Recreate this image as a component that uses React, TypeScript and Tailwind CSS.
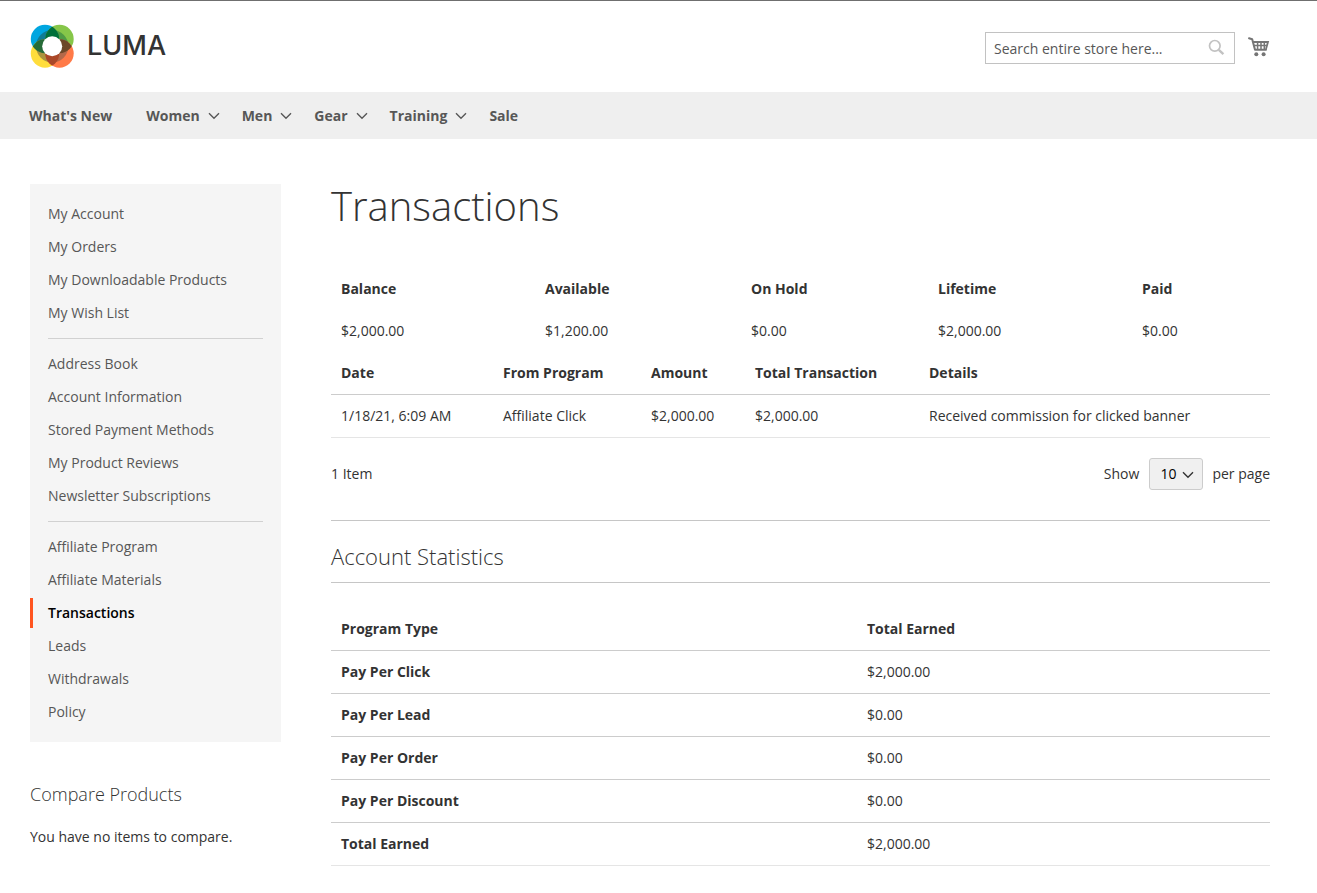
import type { ReactNode } from "react"

const navItems = [
  { label: "What's New", children: false },
  { label: "Women", children: true },
  { label: "Men", children: true },
  { label: "Gear", children: true },
  { label: "Training", children: true },
  { label: "Sale", children: false },
]

const accountLinks = [
  ["My Account", "My Orders", "My Downloadable Products", "My Wish List"],
  [
    "Address Book",
    "Account Information",
    "Stored Payment Methods",
    "My Product Reviews",
    "Newsletter Subscriptions",
  ],
  ["Affiliate Program", "Affiliate Materials", "Transactions", "Leads", "Withdrawals", "Policy"],
]

const balances = [
  { label: "Balance", value: "$2,000.00", width: "w-[204px]" },
  { label: "Available", value: "$1,200.00", width: "w-[206px]" },
  { label: "On Hold", value: "$0.00", width: "w-[187px]" },
  { label: "Lifetime", value: "$2,000.00", width: "w-[204px]" },
  { label: "Paid", value: "$0.00", width: "" },
]

const transactions = [
  {
    id: 1,
    date: "1/18/21, 6:09 AM",
    program: "Affiliate Click",
    amount: "$2,000.00",
    total: "$2,000.00",
    details: "Received commission for clicked banner",
  },
]

const statistics = [
  { type: "Pay Per Click", total: "$2,000.00" },
  { type: "Pay Per Lead", total: "$0.00" },
  { type: "Pay Per Order", total: "$0.00" },
  { type: "Pay Per Discount", total: "$0.00" },
  { type: "Total Earned", total: "$2,000.00" },
]

const Logo = () => (
  <a href="#" aria-label="Luma" className="flex items-center gap-3">
    <svg width="45" height="45" viewBox="0 0 45 45" aria-hidden="true">
      <defs>
        <clipPath id="tl"><circle cx="15" cy="15" r="14.2" /></clipPath>
        <clipPath id="tr"><circle cx="29.5" cy="15" r="14.2" /></clipPath>
        <clipPath id="bl"><circle cx="15" cy="29.5" r="14.2" /></clipPath>
        <clipPath id="br"><circle cx="29.5" cy="29.5" r="14.2" /></clipPath>
      </defs>
      <circle cx="15" cy="15" r="14.2" fill="#00a6e0" />
      <circle cx="29.5" cy="15" r="14.2" fill="#86c649" />
      <circle cx="15" cy="29.5" r="14.2" fill="#ffdd3c" />
      <circle cx="29.5" cy="29.5" r="14.2" fill="#ff7a48" />
      <circle cx="22.2" cy="22.2" r="16.2" fill="#107c94" clipPath="url(#tl)" />
      <circle cx="22.2" cy="22.2" r="16.2" fill="#4f9b45" clipPath="url(#tr)" />
      <circle cx="22.2" cy="22.2" r="16.2" fill="#ab943d" clipPath="url(#bl)" />
      <circle cx="22.2" cy="22.2" r="16.2" fill="#b4694a" clipPath="url(#br)" />
      <g clipPath="url(#tl)">
        <circle cx="29.5" cy="15" r="14.2" fill="#00703a" />
        <circle cx="15" cy="29.5" r="14.2" fill="#266b38" />
      </g>
      <g clipPath="url(#br)">
        <circle cx="29.5" cy="15" r="14.2" fill="#6c4828" />
        <circle cx="15" cy="29.5" r="14.2" fill="#aa4828" />
      </g>
      <circle cx="22.2" cy="22.2" r="10" fill="#fff" />
    </svg>
    <span className="font-['Inter',sans-serif] text-[27px] leading-8 font-medium text-[#333]">LUMA</span>
  </a>
)

const Chevron = ({ className = "" }: { className?: string }) => (
  <svg width="12" height="8" viewBox="0 0 12 8" fill="none" stroke="currentColor" className={className} aria-hidden="true">
    <path d="M1 1.2 6 6.2 11 1.2" strokeWidth="1.4" />
  </svg>
)

const Header = () => (
  <header className="border-t border-[#6f6f6f]">
    <div className="flex h-[91px] max-w-[1300px] items-center justify-between px-[30px] pb-px">
      <Logo />
      <div className="flex items-center gap-[13px] pt-[3px]">
        <form className="flex h-8 w-[250px] items-center border border-[#c2c2c2] bg-white">
          <input
            type="text"
            aria-label="Search"
            placeholder="Search entire store here..."
            className="h-full min-w-0 flex-1 pt-px pl-2 text-sm placeholder:text-[#575757] outline-none"
          />
          <button type="submit" aria-label="Search" className="px-[9px] text-[#c2c2c2]">
            <svg width="17" height="17" viewBox="0 0 17 17" fill="none" stroke="currentColor">
              <circle cx="6.8" cy="6.8" r="5.3" strokeWidth="1.7" />
              <path d="m10.8 10.8 4.6 4.4" strokeWidth="2.4" />
            </svg>
          </button>
        </form>
        <a href="#" aria-label="My Cart" className="pb-px text-[#757575]">
          <svg width="22" height="22" viewBox="0 0 22 22" fill="none" stroke="currentColor">
            <path d="M1 2.2 4.2 3.2 7 13.8H18" strokeWidth="2" strokeLinecap="round" strokeLinejoin="round" />
            <path d="M5 6H20L18 13" strokeWidth="1.8" />
            <path d="M6 9.5H18.6M9.6 6V13M13 6V13M16.3 6V13" strokeWidth="1.5" />
            <circle cx="8.3" cy="18.2" r="2" fill="currentColor" stroke="none" />
            <circle cx="15.6" cy="18.2" r="2" fill="currentColor" stroke="none" />
          </svg>
        </a>
      </div>
    </div>
  </header>
)

const Navigation = () => (
  <nav className="bg-[#efefef]">
    <ul className="flex h-[47px] max-w-[1300px] items-center px-[29px] text-sm font-bold text-[#575757]">
      {navItems.map((item) => (
        <li key={item.label} className={item.children ? "mr-[22px]" : "mr-[34px]"}>
          <a href="#" className="flex items-center gap-2">
            {item.label}
            {item.children && <Chevron />}
          </a>
        </li>
      ))}
    </ul>
  </nav>
)

const Sidebar = () => (
  <aside className="w-[251px] shrink-0">
    <nav className="bg-[#f5f5f5] pt-[15px] pb-3">
      {accountLinks.map((group, index) => (
        <ul
          key={group[0]}
          className={index > 0 ? "mt-[7px] before:mx-[18px] before:mb-[10px] before:block before:border-t before:border-[#d1d1d1]" : ""}
        >
          {group.map((label) => (
            <li key={label} className="pb-[3px]">
              <a
                href="#"
                className={
                  label === "Transactions"
                    ? "block border-l-[3px] border-[#ff5520] py-[5px] pl-[15px] font-semibold text-black"
                    : "block py-[5px] pl-[18px] text-[#575757]"
                }
              >
                {label}
              </a>
            </li>
          ))}
        </ul>
      ))}
    </nav>
    <section className="mt-10">
      <h2 className="text-lg leading-6 font-light">Compare Products</h2>
      <p className="mt-[21px]">You have no items to compare.</p>
    </section>
  </aside>
)

const Th = ({ children, className = "" }: { children: ReactNode; className?: string }) => (
  <th scope="col" className={`px-[10px] py-[11px] text-left font-bold ${className}`}>
    {children}
  </th>
)

const Td = ({ children }: { children: ReactNode }) => <td className="px-[10px] py-[11px]">{children}</td>

const App = () => {
  return (
    <div className="bg-white font-['Open_Sans',sans-serif] text-sm leading-5 text-[#333]">
      <Header />
      <Navigation />
      <div className="flex max-w-[1300px] gap-[50px] px-[30px] pt-[45px] pb-6">
        <Sidebar />
        <main className="min-w-0 flex-1">
          <h1 className="text-[40px] leading-[44px] font-light">Transactions</h1>

          <table className="mt-10 w-full table-fixed">
            <thead>
              <tr>
                {balances.map((item) => (
                  <Th key={item.label} className={item.width}>
                    {item.label}
                  </Th>
                ))}
              </tr>
            </thead>
            <tbody>
              <tr>
                {balances.map((item) => (
                  <Td key={item.label}>{item.value}</Td>
                ))}
              </tr>
            </tbody>
          </table>

          <table className="w-full table-fixed">
            <thead>
              <tr className="border-b border-[#ccc]">
                <Th className="w-[162px]">Date</Th>
                <Th className="w-[148px]">From Program</Th>
                <Th className="w-[104px]">Amount</Th>
                <Th className="w-[174px]">Total Transaction</Th>
                <Th>Details</Th>
              </tr>
            </thead>
            <tbody>
              {transactions.map((item) => (
                <tr key={item.id} className="border-b border-[#e5e5e5]">
                  <Td>{item.date}</Td>
                  <Td>{item.program}</Td>
                  <Td>{item.amount}</Td>
                  <Td>{item.total}</Td>
                  <Td>{item.details}</Td>
                </tr>
              ))}
            </tbody>
          </table>

          <div className="mt-5 flex items-center justify-between">
            <p>1 Item</p>
            <div className="flex items-center">
              <label htmlFor="limiter">Show</label>
              <div className="relative mr-[9px] ml-[10px]">
                <select
                  id="limiter"
                  defaultValue="10"
                  className="h-8 w-[54px] appearance-none rounded-[3px] border border-[#ccc] bg-[#f0f0f0] pl-[10px] text-black"
                >
                  <option>10</option>
                  <option>20</option>
                  <option>50</option>
                </select>
                <Chevron className="pointer-events-none absolute top-[13px] right-[9px]" />
              </div>
              <span>per page</span>
            </div>
          </div>

          <section className="mt-[30px] border-t border-[#c6c6c6] pt-[21px]">
            <h2 className="border-b border-[#c6c6c6] pb-3 text-[22px] leading-7 font-light">Account Statistics</h2>
            <table className="mt-[25px] w-full table-fixed">
              <thead>
                <tr className="border-b border-[#ccc]">
                  <Th className="w-[526px]">Program Type</Th>
                  <Th>Total Earned</Th>
                </tr>
              </thead>
              <tbody>
                {statistics.map((item) => (
                  <tr key={item.type} className="border-b border-[#ccc] last:border-[#e5e5e5]">
                    <th scope="row" className="px-[10px] py-[11px] text-left font-bold">
                      {item.type}
                    </th>
                    <Td>{item.total}</Td>
                  </tr>
                ))}
              </tbody>
            </table>
          </section>
        </main>
      </div>
    </div>
  )
}

export default App
